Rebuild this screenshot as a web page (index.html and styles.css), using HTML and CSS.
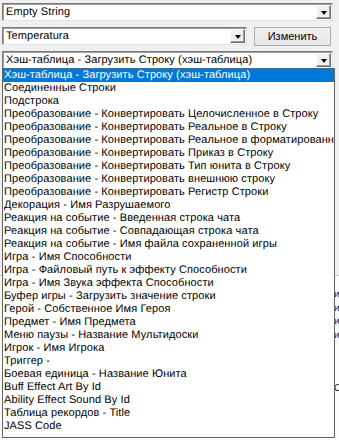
FILE: index.html
```html
<!DOCTYPE html>
<html>
<head>
<meta charset="utf-8">
<link rel="stylesheet" href="styles.css">
</head>
<body>
<div class="dialog">
  <div class="row">
    <div class="combo wide"><span class="value">Empty String</span><span class="arrow"></span></div>
  </div>
  <div class="row">
    <div class="combo mid"><span class="value">Temperatura</span><span class="arrow"></span></div>
    <button class="btn">Изменить</button>
  </div>
  <div class="row">
    <div class="combo wide"><span class="value">Хэш-таблица - Загрузить Строку (хэш-таблица)</span><span class="arrow"></span></div>
  </div>
  <div class="under">
    <div class="under-line">и</div>
    <div class="under-line">и</div>
    <div class="under-line">и</div>
    <div class="under-line">и</div>
    <div class="under-line gap">О</div>
  </div>
  <ul class="list">
    <li class="sel">Хэш-таблица - Загрузить Строку (хэш-таблица)</li>
    <li>Соединенные Строки</li>
    <li>Подстрока</li>
    <li>Преобразование - Конвертировать Целочисленное в Строку</li>
    <li>Преобразование - Конвертировать Реальное в Строку</li>
    <li>Преобразование - Конвертировать Реальное в форматированную строку</li>
    <li>Преобразование - Конвертировать Приказ в Строку</li>
    <li>Преобразование - Конвертировать Тип юнита в Строку</li>
    <li>Преобразование - Конвертировать внешнюю строку</li>
    <li>Преобразование - Конвертировать Регистр Строки</li>
    <li>Декорация - Имя Разрушаемого</li>
    <li>Реакция на событие - Введенная строка чата</li>
    <li>Реакция на событие - Совпадающая строка чата</li>
    <li>Реакция на событие - Имя файла сохраненной игры</li>
    <li>Игра - Имя Способности</li>
    <li>Игра - Файловый путь к эффекту Способности</li>
    <li>Игра - Имя Звука эффекта Способности</li>
    <li>Буфер игры - Загрузить значение строки</li>
    <li>Герой - Собственное Имя Героя</li>
    <li>Предмет - Имя Предмета</li>
    <li>Меню паузы - Название Мультидоски</li>
    <li>Игрок - Имя Игрока</li>
    <li>Триггер -</li>
    <li>Боевая единица - Название Юнита</li>
    <li>Buff Effect Art By Id</li>
    <li>Ability Effect Sound By Id</li>
    <li>Таблица рекордов - Title</li>
    <li>JASS Code</li>
  </ul>
</div>
</body>
</html>
```
FILE: styles.css
```css
html, body {
  margin: 0;
  padding: 0;
  background: #f0f0f0;
}
body {
  font-family: "Liberation Sans", Arial, sans-serif;
  font-size: 11px;
  letter-spacing: 0.1px;
  text-rendering: geometricPrecision;
  color: #000;
  width: 339px;
  height: 440px;
  overflow: hidden;
}
.dialog {
  position: relative;
  padding: 3px 0 0 2px;
  display: flex;
  flex-direction: column;
  gap: 5px;
}
.row {
  display: flex;
  align-items: center;
  gap: 7px;
  height: 18px;
}
.row + .row { margin-top: 1px; }
.combo {
  box-sizing: border-box;
  height: 18px;
  background: #fff;
  border-top: 1px solid #7a7a7a;
  border-left: 1px solid #7a7a7a;
  border-right: 1px solid #e3e3e3;
  border-bottom: 1px solid #e3e3e3;
  box-shadow: inset 1px 1px 0 #a0a0a0;
  display: flex;
  align-items: center;
  padding: 0 1px 0 2px;
}
.combo.wide { width: 331px; }
.combo.mid { width: 245px; }
.value {
  flex: 1;
  white-space: nowrap;
  overflow: hidden;
  padding-left: 1px;
}
.arrow {
  box-sizing: border-box;
  width: 15px;
  height: 14px;
  background: #f0f0f0;
  border-top: 1px solid #fff;
  border-left: 1px solid #fff;
  border-right: 1px solid #696969;
  border-bottom: 1px solid #696969;
  box-shadow: inset -1px -1px 0 #a0a0a0;
  display: flex;
  align-items: center;
  justify-content: center;
}
.arrow::after {
  content: "";
  width: 0;
  height: 0;
  border-left: 3.5px solid transparent;
  border-right: 3.5px solid transparent;
  border-top: 4px solid #000;
  margin-top: 1px;
}
.btn {
  box-sizing: border-box;
  width: 77px;
  height: 19px;
  font: inherit;
  color: #000;
  padding: 0;
  background: linear-gradient(#f2f2f2, #e5e5e5);
  border: 1px solid #adadad;
  border-radius: 0;
}
.under {
  margin-top: 201px;
  margin-left: -2px;
  border-top: 1px solid #c8c8c8;
  background: #fbfbfb;
  height: 170px;
  padding: 13px 0 0 334px;
  box-sizing: border-box;
  font-size: 10px;
}
.under-line {
  height: 13.5px;
  white-space: nowrap;
  color: #222;
}
.under-line.gap { margin-top: 40px; }
.list {
  position: absolute;
  left: 2px;
  top: 68px;
  width: 333px;
  height: 370px;
  box-sizing: border-box;
  margin: 0;
  padding: 0;
  list-style: none;
  background: #fff;
  border: 1px solid #646464;
  overflow: hidden;
}
.list li {
  height: 13px;
  line-height: 13px;
  padding-left: 1px;
  white-space: nowrap;
}
.list li.sel {
  background: #0078d7;
  color: #fff;
}
```
